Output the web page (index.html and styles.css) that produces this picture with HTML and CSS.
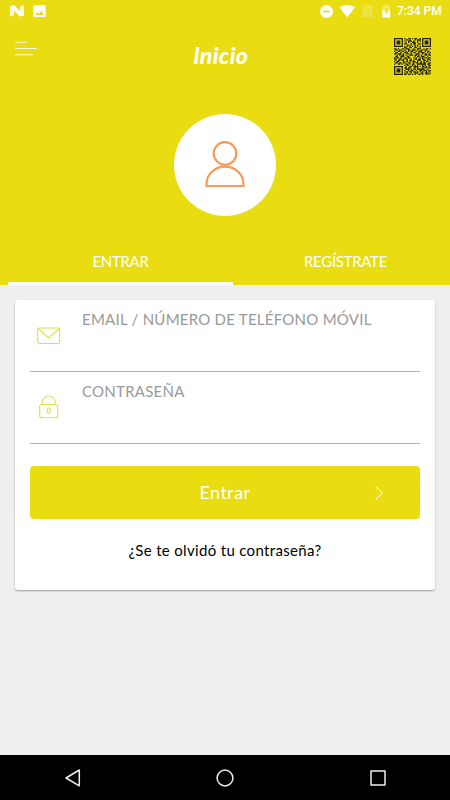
FILE: index.html
```html
<!DOCTYPE html>
<html lang="es">
  <head>
    <meta charset="UTF-8" />
    <title>Inicio</title>
    <meta name="viewport" content="width=device-width, initial-scale=1.0" />
    <link rel="stylesheet" href="styles.css">
  </head>
  <body>
    <header>
      <div class="status-bar">
        <svg class="status-left" width="50" height="23" viewBox="0 0 50 23" fill="#fff">
          <path d="M10 6.500L14 5v10.500l-4 1zM20 6.500L24 5v10.500l-4 1z" opacity=".8" />
          <path d="M10 6.500L14 5l10 10.500-4 1z" />
          <path fill-rule="evenodd" d="M34.500 5h10q1.200 0 1.200 1.200v9.600q0 1.200-1.200 1.200h-10q-1.200 0-1.200-1.200V6.200Q33.300 5 34.500 5zM35 15h9l-2.800-4-2.200 2.800-1.500-1.800z" />
        </svg>
        <svg class="status-right" width="76" height="23" viewBox="0 0 76 23" fill="#fff">
          <circle cx="6.500" cy="11.500" r="6.500" />
          <path d="M3 11.500h7" stroke="#e9dd12" stroke-width="1.600" />
          <path d="M19.500 7.300Q27 2 35 7.300L27.200 17.500z" />
          <path d="M42.500 7l2-2h8v12h-10z" opacity=".25" />
          <path d="M42 5l11 12" stroke="#e9dd12" stroke-width="2" />
          <path d="M42 5l11 12" stroke="#fff" stroke-width=".8" opacity=".4" />
          <path d="M62.300 6h2V4.500h3.500V6h2.200v5h-7.700z" opacity=".35" />
          <path d="M62.300 10.500h7.900v7h-7.900z" />
          <path d="M67 8l-2.500 4h1.700v3l2.300-4h-1.500z" fill="#e9dd12" />
        </svg>
        <span class="time">7:34 PM</span>
      </div>

      <div class="toolbar">
        <svg class="menu-icon" width="24" height="18" viewBox="0 0 24 18" stroke="#fff" stroke-opacity=".85" stroke-width="1.100">
          <path d="M1 3.300h12M1 9.500h22M1 15.700h18" />
        </svg>
        <h1>lnicio</h1>
        <svg class="qr-code" id="qrCode" width="37" height="37" viewBox="0 0 29 29"></svg>
      </div>

      <div class="avatar">
        <svg width="42" height="50" viewBox="0 0 42 50" fill="none" stroke="#f59a5a" stroke-width="2.200">
          <circle cx="21" cy="15.500" r="11.300" />
          <path d="M2.500 48v-1.800a18.500 17.500 0 0 1 37 0v1.800z" />
        </svg>
      </div>

      <nav class="tabs">
        <a class="tab active">ENTRAR</a>
        <a class="tab">REGÍSTRATE</a>
      </nav>
    </header>

    <main>
      <div class="card">
        <div class="field">
          <svg class="mail-icon" width="38" height="24" viewBox="0 0 38 24" fill="none" stroke="#dce051" stroke-width="1.100">
            <rect x="7.700" y="4" width="22" height="15.500" rx="1.500" />
            <path d="M8.200 4.500l10.500 9.500L29.200 4.500" />
          </svg>
          <label>EMAIL / NÚMERO DE TELÉFONO MÓVIL</label>
        </div>
        <div class="field">
          <svg class="lock-icon" width="38" height="26" viewBox="0 0 38 26" fill="none" stroke="#dce051" stroke-width="1.100">
            <rect x="9.700" y="10.500" width="18" height="13.300" rx="2" />
            <path d="M12.200 10.500V8.500a6.500 6.500 0 0 1 13 0v2" />
            <rect x="17.500" y="14" width="2.700" height="5.200" rx="1.200" />
          </svg>
          <label>CONTRASEÑA</label>
        </div>
        <button class="submit-btn">
          <span>Entrar</span>
          <svg class="arrow" width="10" height="16" viewBox="0 0 10 16" fill="none" stroke="#fff" stroke-width="1">
            <path d="M1.500 1.500L8.500 8l-7 6.500" />
          </svg>
        </button>
        <a class="forgot">¿Se te olvidó tu contraseña?</a>
      </div>
    </main>

    <footer>
      <svg width="18" height="20" viewBox="0 0 18 20"><path d="M16.300 2v15.800L3 10z" /></svg>
      <svg width="18" height="20" viewBox="0 0 18 20"><circle cx="9" cy="10" r="7.900" /></svg>
      <svg width="18" height="20" viewBox="0 0 18 20"><rect x="2" y="3" width="14" height="14" /></svg>
    </footer>

    <script src="script.js"></script>
  </body>
</html>
```
FILE: styles.css
```css
* {
  box-sizing: border-box;
}
body {
  margin: 0;
  height: 800px;
  display: flex;
  flex-direction: column;
  overflow: hidden;
  font-family: Lato, sans-serif;
  background-color: #efefef;
}
header {
  height: 285px;
  background-color: #e9dd12;
  color: #fff;
}
.status-bar {
  height: 23px;
  display: flex;
  align-items: center;
  padding-right: 7px;
}
.status-right {
  margin-left: auto;
}
.time {
  width: 46px;
  margin-left: 1px;
  font: 500 12px/23px Roboto, sans-serif;
  white-space: nowrap;
}
.toolbar {
  height: 67px;
  display: grid;
  grid-template-columns: 60px 1fr 60px;
  align-items: start;
}
.menu-icon {
  margin: 16px 0 0 14px;
}
h1 {
  margin: 18px 0 0;
  padding-right: 8px;
  text-align: center;
  font: italic 900 23px/28px Lato, sans-serif;
  letter-spacing: 0.4px;
}
.qr-code {
  margin: 15px 0 0 4px;
}
.avatar {
  width: 102px;
  height: 102px;
  margin: 24px auto 0;
  padding-top: 24px;
  border-radius: 50%;
  background: #fff;
  text-align: center;
}
.tabs {
  display: flex;
  margin: 22px 0 0 8px;
}
.tab {
  flex: 0 0 225px;
  height: 47px;
  padding-top: 12px;
  text-align: center;
  font-size: 15px;
  line-height: 22px;
  letter-spacing: -0.3px;
  border-bottom: 3px solid transparent;
}
.tab.active {
  border-bottom-color: #fff;
}
main {
  flex: 1;
  padding: 15px 15px 0;
}
.card {
  height: 290px;
  padding: 0 15px;
  background: #fff;
  border-radius: 3px;
  box-shadow: 0 1px 2px rgba(0, 0, 0, 0.35);
}
.field {
  height: 72px;
  display: flex;
  border-bottom: 1px solid #b5b5b5;
}
.field label {
  margin: 8px 0 0 14px;
  font-size: 15px;
  line-height: 22px;
  letter-spacing: 0.25px;
  color: #999;
  white-space: nowrap;
}
.mail-icon {
  margin-top: 24px;
}
.lock-icon {
  margin-top: 22px;
}
.submit-btn {
  width: 100%;
  height: 53px;
  margin-top: 22px;
  padding: 0 36px 0 46px;
  display: flex;
  align-items: center;
  border: none;
  border-radius: 4px;
  background: #e9dd12;
  color: #fff;
  font: 18px Lato, sans-serif;
  letter-spacing: 0.45px;
}
.submit-btn span {
  flex: 1;
  padding-bottom: 2px;
  text-align: center;
}
.forgot {
  display: block;
  margin-top: 20px;
  text-align: center;
  font-size: 15px;
  line-height: 22px;
  letter-spacing: 0.33px;
  color: #000;
}
footer {
  height: 45px;
  padding: 0 63px;
  display: flex;
  justify-content: space-between;
  align-items: center;
  background: #000;
}
footer svg {
  fill: none;
  stroke: #eee;
  stroke-width: 1.500;
  stroke-linejoin: round;
}
```
FILE: script.js
```js
const qrRows = [
  "#######.#..##.#.##..#.#######",
  "#.....#..##.#...#.###.#.....#",
  "#.###.#.#..###.#..#.#.#.###.#",
  "#.###.#..#.#..###.#...#.###.#",
  "#.###.#.##...#.##..##.#.###.#",
  "#.....#...##.#..#.#...#.....#",
  "#######.#.#.#.#.#.#.#.#######",
  "........##..##..##..#........",
  "##.#..##.###...#..###..#.##.#",
  ".##.##..#..##.###.#..##.##...",
  "#..##.##.#.#.##..#.###..#.##.",
  ".##..#..###..#.##..#.###..#.#",
  "##.###.#..##.#...###..#.##.#.",
  "..#.#.##.#..###.##.#.#..##.##",
  ".##..###..##....#.##.###..#..",
  "#.##.#..##.##..#.#..#.#.##.##",
  "##..##.#.##..#..##.##.##..##.",
  ".#.##.##..#.##.#..###..##.#.#",
  "#.##...#.##.#.###.#..#.#.##..",
  ".##.##.##..##..#.##.##.##..##",
  "#..##.#..##.#.##..#######.##.",
  "........#.##..#.#.#...#.#..##",
  "#######..#..##.####.#.##.#.#.",
  "#.....#.##.##...#.#...#.##.##",
  "#.###.#..###.#.##.######..#..",
  "#.###.#.#..#.##..#..##.###.##",
  "#.###.#..##.##.##.#.#.#..#.#.",
  "#.....#.#.#..#..###..##.###.#",
  "#######.##.##.#.#..##.#..#.#."
];

let path = "";
qrRows.forEach((row, y) => {
  [...row].forEach((cell, x) => {
    if (cell === "#") path += `M${x} ${y}h1v1h-1z`;
  });
});
document.getElementById("qrCode").innerHTML = `<path fill="#25210a" d="${path}"/>`;
```
